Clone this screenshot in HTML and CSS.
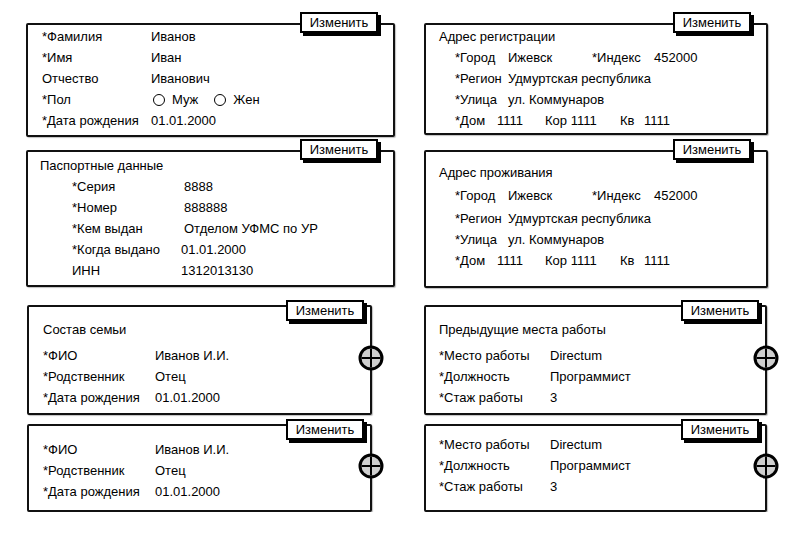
FILE: index.html
```html
<!DOCTYPE html>
<html lang="ru">
<head>
    <meta charset="UTF-8">
    <meta name="viewport" content="width=device-width, initial-scale=1.0">
    <title>Анкета сотрудника</title>
    <link rel="stylesheet" href="styles.css">
</head>
<body>
    <div class="board">
        <!-- Личные данные / адрес регистрации -->
        <div class="row row-first">
            <section class="card card-person">
                <button class="edit">Изменить</button>
                <div class="field"><span class="label">*Фамилия</span><span>Иванов</span></div>
                <div class="field"><span class="label">*Имя</span><span>Иван</span></div>
                <div class="field"><span class="label">Отчество</span><span>Иванович</span></div>
                <div class="field">
                    <span class="label">*Пол</span>
                    <span class="radio"></span><span class="radio-text">Муж</span>
                    <span class="radio"></span><span>Жен</span>
                </div>
                <div class="field"><span class="label label-tight">*Дата рождения</span><span>01.01.2000</span></div>
            </section>

            <section class="card card-reg">
                <button class="edit">Изменить</button>
                <div class="title">Адрес регистрации</div>
                <div class="addr">
                    <span class="a-label">*Город</span><span class="a-city">Ижевск</span><span class="a-idx">*Индекс</span><span>452000</span>
                </div>
                <div class="addr"><span class="a-label">*Регион</span><span>Удмуртская республика</span></div>
                <div class="addr"><span class="a-label">*Улица</span><span>ул. Коммунаров</span></div>
                <div class="addr">
                    <span class="a-dom">*Дом</span><span class="a-num">1111</span><span class="a-kor">Кор 1111</span><span class="a-kv">Кв</span><span>1111</span>
                </div>
            </section>
        </div>

        <!-- Паспорт / адрес проживания -->
        <div class="row row-second">
            <section class="card card-passport">
                <button class="edit">Изменить</button>
                <div class="title">Паспортные данные</div>
                <div class="pass"><span class="p-label">*Серия</span><span>8888</span></div>
                <div class="pass"><span class="p-label">*Номер</span><span>888888</span></div>
                <div class="pass"><span class="p-label">*Кем выдан</span><span>Отделом УФМС по УР</span></div>
                <div class="pass"><span class="p-label p-short">*Когда выдано</span><span>01.01.2000</span></div>
                <div class="pass"><span class="p-label p-short">ИНН</span><span>1312013130</span></div>
            </section>

            <section class="card card-live">
                <button class="edit">Изменить</button>
                <div class="title">Адрес проживания</div>
                <div class="addr addr-wide">
                    <span class="a-label">*Город</span><span class="a-city">Ижевск</span><span class="a-idx">*Индекс</span><span>452000</span>
                </div>
                <div class="addr"><span class="a-label">*Регион</span><span>Удмуртская республика</span></div>
                <div class="addr"><span class="a-label">*Улица</span><span>ул. Коммунаров</span></div>
                <div class="addr">
                    <span class="a-dom">*Дом</span><span class="a-num">1111</span><span class="a-kor">Кор 1111</span><span class="a-kv">Кв</span><span>1111</span>
                </div>
            </section>
        </div>

        <!-- Состав семьи / места работы -->
        <div class="row row-third">
            <section class="card card-small card-family">
                <button class="edit">Изменить</button>
                <div class="title title-gap">Состав семьи</div>
                <div class="field"><span class="label">*ФИО</span><span>Иванов И.И.</span></div>
                <div class="field"><span class="label">*Родственник</span><span>Отец</span></div>
                <div class="field"><span class="label">*Дата рождения</span><span>01.01.2000</span></div>
                <span class="add"><svg viewBox="0 0 26 26" width="26" height="26"><circle cx="13" cy="13" r="11" fill="#cfcfcf" stroke="#000" stroke-width="3"/><path d="M13 3.5V22.5M3.5 13H22.5" stroke="#000" stroke-width="2"/></svg></span>
            </section>

            <section class="card card-small card-job">
                <button class="edit">Изменить</button>
                <div class="title title-gap">Предыдущие места работы</div>
                <div class="field"><span class="label">*Место работы</span><span>Directum</span></div>
                <div class="field"><span class="label">*Должность</span><span>Программист</span></div>
                <div class="field"><span class="label">*Стаж работы</span><span>3</span></div>
                <span class="add"><svg viewBox="0 0 26 26" width="26" height="26"><circle cx="13" cy="13" r="11" fill="#cfcfcf" stroke="#000" stroke-width="3"/><path d="M13 3.5V22.5M3.5 13H22.5" stroke="#000" stroke-width="2"/></svg></span>
            </section>
        </div>

        <div class="row row-fourth">
            <section class="card card-small card-family-2">
                <button class="edit">Изменить</button>
                <div class="field"><span class="label">*ФИО</span><span>Иванов И.И.</span></div>
                <div class="field"><span class="label">*Родственник</span><span>Отец</span></div>
                <div class="field"><span class="label">*Дата рождения</span><span>01.01.2000</span></div>
                <span class="add"><svg viewBox="0 0 26 26" width="26" height="26"><circle cx="13" cy="13" r="11" fill="#cfcfcf" stroke="#000" stroke-width="3"/><path d="M13 3.5V22.5M3.5 13H22.5" stroke="#000" stroke-width="2"/></svg></span>
            </section>

            <section class="card card-small card-job-2">
                <button class="edit">Изменить</button>
                <div class="field"><span class="label">*Место работы</span><span>Directum</span></div>
                <div class="field"><span class="label">*Должность</span><span>Программист</span></div>
                <div class="field"><span class="label">*Стаж работы</span><span>3</span></div>
                <span class="add"><svg viewBox="0 0 26 26" width="26" height="26"><circle cx="13" cy="13" r="11" fill="#cfcfcf" stroke="#000" stroke-width="3"/><path d="M13 3.5V22.5M3.5 13H22.5" stroke="#000" stroke-width="2"/></svg></span>
            </section>
        </div>
    </div>
</body>
</html>
```

FILE: styles.css
```css
html, body {
    margin: 0;
    background: #fff;
    color: #000;
    font-family: "Liberation Sans", Arial, sans-serif;
    font-size: 13px;
}
.board {
    padding: 23px 0 0 26px;
}
.row {
    display: grid;
    grid-template-columns: 398px 344px;
    align-items: start;
}
.row-second { margin-top: 13px; }
.row-third { margin-top: 17px; }
.row-fourth { margin-top: 9px; }

/* panels */
.card {
    position: relative;
    box-sizing: border-box;
    border: 2px solid #111;
    border-radius: 2px;
    box-shadow: 1px 1px 1px rgba(0,0,0,0.25);
    background: #fff;
    line-height: 21px;
}
.card-person { width: 369px; height: 114px; padding: 1px 0 0 14px; }
.card-reg { width: 344px; height: 112px; padding: 1px 0 0 13px; }
.card-passport { width: 369px; height: 137px; padding: 3px 0 0 12px; }
.card-live { width: 344px; height: 138px; padding: 10px 0 0 13px; }
.card-small { height: 110px; }
.card-family { width: 345px; margin-left: 1px; padding: 12px 0 0 14px; }
.card-job { width: 343px; padding: 12px 0 0 13px; }
.card-family-2 { width: 345px; height: 88px; margin-left: 1px; padding: 13px 0 0 14px; }
.card-job-2 { width: 343px; height: 88px; padding: 8px 0 0 13px; }

.title { white-space: nowrap; }
.card-live .title { margin-bottom: 2px; }
.title-gap { margin-bottom: 5px; }

/* edit button sitting on the top border */
.edit {
    position: absolute;
    top: -13px;
    right: 15px;
    width: 78px;
    height: 21px;
    padding: 0;
    border: 2px solid #000;
    background: #fff;
    box-shadow: 3px 3px 0 #000;
    font: 13px "Liberation Sans", Arial, sans-serif;
    color: #000;
    line-height: 17px;
}
.card-small .edit {
    top: -7px;
    right: 6px;
}

/* plus button on the right border */
.add {
    position: absolute;
    right: -14px;
    top: 50%;
    margin-top: -15px;
    width: 26px;
    height: 26px;
}
.add svg { display: block; }

/* label / value rows */
.field {
    display: flex;
    align-items: center;
    white-space: nowrap;
}
.field .label { width: 109px; flex: none; }
.card-small .field .label { width: 112px; }
.card-job .field .label,
.card-job-2 .field .label { width: 111px; }

.radio {
    display: inline-block;
    box-sizing: border-box;
    width: 12px;
    height: 12px;
    border: 1.5px solid #000;
    border-radius: 50%;
    margin: 0 7px 0 2px;
}
.radio-text { margin-right: 14px; }

/* address rows */
.addr {
    display: flex;
    white-space: nowrap;
    padding-left: 16px;
}
.addr-wide { margin-bottom: 2px; }
.a-label { width: 53px; flex: none; }
.a-city { width: 84px; flex: none; }
.a-idx { width: 62px; flex: none; }
.a-dom { width: 42px; flex: none; }
.a-num { width: 48px; flex: none; }
.a-kor { width: 75px; flex: none; }
.a-kv { width: 24px; flex: none; }

/* passport rows */
.pass {
    display: flex;
    white-space: nowrap;
    padding-left: 32px;
}
.p-label { width: 112px; flex: none; }
.p-short { width: 109px; }
```
